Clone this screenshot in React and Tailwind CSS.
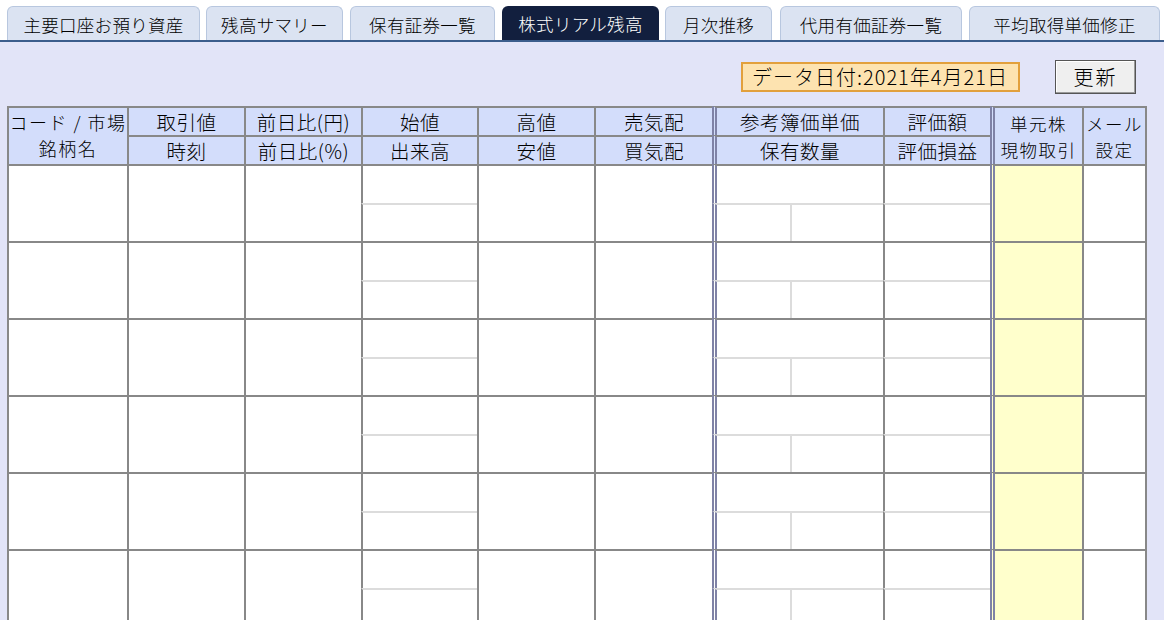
import React from "react";

const tabs = [
  { label: "主要口座お預り資産", w: "w-[193px]", ml: "ml-[7px]" },
  { label: "残高サマリー", w: "w-[137px]", ml: "ml-[6px]" },
  { label: "保有証券一覧", w: "w-[145px]", ml: "ml-[7px]" },
  { label: "株式リアル残高", w: "w-[157px]", ml: "ml-[7px]", active: true },
  { label: "月次推移", w: "w-[107px]", ml: "ml-[6px]" },
  { label: "代用有価証券一覧", w: "w-[182px]", ml: "ml-[8px]" },
  { label: "平均取得単価修正", w: "w-[191px]", ml: "ml-[7px]" },
];

const G = "border-[#888888]";
const dbl = "[border-left-style:double] border-l-[5px] border-l-[#7f82a6]";
const cellBase = "p-0 bg-[#d3ddfb] font-light text-center text-black whitespace-nowrap border-t-2 border-l-2 " + G;
const th = cellBase + " text-[19.5px] leading-[24px] tracking-[0.5px]";
// two-line headers that span both header rows
const th2 = cellBase + " align-top text-[17.5px] leading-[26px] tracking-[1.5px]";

function DataRow() {
  const base = "p-0 bg-white border-t-2 border-l-2 " + G;
  const split = "p-0 bg-white border-t-2 border-t-[#dcdcdc] border-l-2";
  return (
    <>
      <tr className="h-[39px]">
        <td rowSpan={2} className={base}></td>
        <td rowSpan={2} className={base}></td>
        <td rowSpan={2} className={base}></td>
        <td className={base}></td>
        <td rowSpan={2} className={base}></td>
        <td rowSpan={2} className={base}></td>
        <td colSpan={2} className={base + " " + dbl}></td>
        <td className={base}></td>
        <td rowSpan={2} className={"p-0 bg-[#ffffcc] border-t-2 border-l-2 " + G + " " + dbl}></td>
        <td rowSpan={2} className={base + " border-r-2"}></td>
      </tr>
      <tr className="h-[38px]">
        <td className={split + " " + G}></td>
        <td className={split + " " + G + " " + dbl}></td>
        <td className={split + " border-l-[#dcdcdc]"}></td>
        <td className={split + " " + G}></td>
      </tr>
    </>
  );
}

export default function App() {
  return (
    <div className="w-[1164px] h-[620px] overflow-hidden bg-white font-['Noto_Sans_CJK_JP','Noto_Sans',sans-serif] font-light text-black">
      {/* Tabs */}
      <div className="flex items-end h-[40px] pt-[6px]">
        {tabs.map((t) => (
          <div
            key={t.label}
            className={`${t.w} ${t.ml} h-[34px] flex items-center justify-center pt-[3px] rounded-t-[6px] text-[17.5px] tracking-[0.3px] ${
              t.active
                ? "bg-[#121f3e] text-white"
                : "bg-[#dbe3f2] border border-b-0 border-[#b8c7df] text-black"
            }`}
          >
            {t.label}
          </div>
        ))}
      </div>
      <div className="h-[2px] bg-[#3b5d8c]" />

      <div className="bg-[#e2e4f8] h-[578px] overflow-hidden">
        {/* Date + refresh */}
        <div className="flex items-center justify-end h-[34px] mt-[18px] pr-[28px]">
          <div className="w-[279px] h-[30px] flex items-center pl-[9px] border-2 border-[#e2a03c] bg-[#fde3b0] text-[20px] leading-none tracking-[1px]">
            データ日付:2021年4月21日
          </div>
          <button className="ml-[35px] w-[81px] h-[34px] flex items-center justify-center border border-[#555555] bg-[#efefef] shadow-[inset_-1px_-1px_0_#9a9a9a,inset_1px_1px_0_#ffffff] text-[20px] leading-none tracking-[2px]">
            更新
          </button>
        </div>

        {/* Table */}
        <table className="mt-[12px] ml-[7px] w-[1140px] table-fixed border-separate border-spacing-0">
          <colgroup>
            <col className="w-[120px]" />
            <col className="w-[117px]" />
            <col className="w-[117px]" />
            <col className="w-[116px]" />
            <col className="w-[117px]" />
            <col className="w-[118px]" />
            <col className="w-[78px]" />
            <col className="w-[93px]" />
            <col className="w-[107px]" />
            <col className="w-[92px]" />
            <col className="w-[65px]" />
          </colgroup>
          <thead>
            <tr className="h-[29px]">
              <th rowSpan={2} className={th2 + " pt-[1px] tracking-[0px] text-[18px]"}>
                コード / 市場
                <br />
                銘柄名
              </th>
              <th className={th}>取引値</th>
              <th className={th}>前日比(円)</th>
              <th className={th}>始値</th>
              <th className={th}>高値</th>
              <th className={th}>売気配</th>
              <th colSpan={2} className={th + " " + dbl}>参考簿価単価</th>
              <th className={th}>評価額</th>
              <th rowSpan={2} className={th2 + " " + dbl + " pt-[3px]"}>
                単元株
                <br />
                現物取引
              </th>
              <th rowSpan={2} className={th2 + " border-r-2 pt-[3px]"}>
                メール
                <br />
                設定
              </th>
            </tr>
            <tr className="h-[29px]">
              <th className={th}>時刻</th>
              <th className={th}>前日比(%)</th>
              <th className={th}>出来高</th>
              <th className={th}>安値</th>
              <th className={th}>買気配</th>
              <th colSpan={2} className={th + " " + dbl}>保有数量</th>
              <th className={th}>評価損益</th>
            </tr>
          </thead>
          <tbody>
            {[1, 2, 3, 4, 5, 6].map((i) => (
              <DataRow key={i} />
            ))}
          </tbody>
        </table>
      </div>
    </div>
  );
}
